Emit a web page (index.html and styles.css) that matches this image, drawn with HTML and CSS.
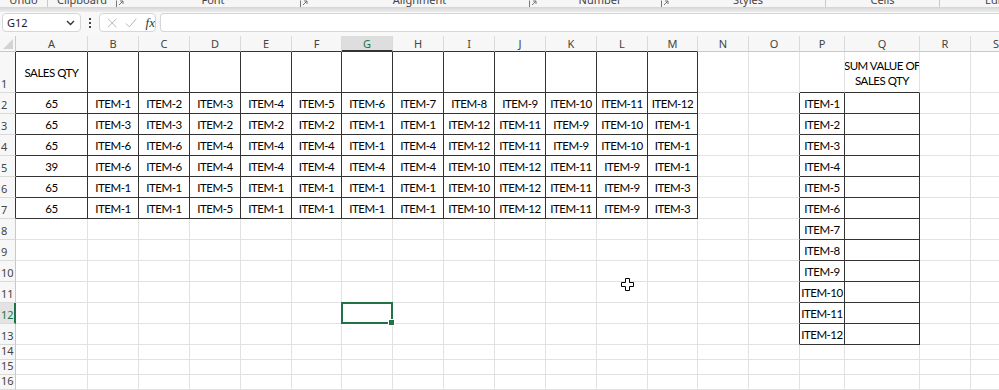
FILE: index.html
```html
<!DOCTYPE html>
<html lang="en">
<head>
<meta charset="UTF-8" />
<title>Book1 - Excel</title>
<link rel="stylesheet" href="styles.css">
</head>
<body>
<div class="ribbon">
    <div class="grp sep" style="width:48px">Undo</div>
    <div class="grp" style="width:68px">Clipboard</div>
    <div class="launch"><svg width="8" height="8" viewBox="0 0 8 8"><path d="M0.5 0.5v7h7M3 5l4-4M4 1h3v3" fill="none" stroke="#777"/></svg></div>
    <div class="grp" style="width:174px">Font</div>
    <div class="launch"><svg width="8" height="8" viewBox="0 0 8 8"><path d="M0.5 0.5v7h7M3 5l4-4M4 1h3v3" fill="none" stroke="#777"/></svg></div>
    <div class="grp" style="width:219px">Alignment</div>
    <div class="launch"><svg width="8" height="8" viewBox="0 0 8 8"><path d="M0.5 0.5v7h7M3 5l4-4M4 1h3v3" fill="none" stroke="#777"/></svg></div>
    <div class="grp" style="width:122px">Number</div>
    <div class="launch"><svg width="8" height="8" viewBox="0 0 8 8"><path d="M0.5 0.5v7h7M3 5l4-4M4 1h3v3" fill="none" stroke="#777"/></svg></div>
    <div class="grp sep" style="width:155px">Styles</div>
    <div class="grp sep" style="width:114px">Cells</div>
    <div class="grp" style="width:126px">Editing</div>
</div>
<div class="ribbon-edge"></div>
<div class="fbar">
    <div class="namebox">
        <span>G12</span>
        <svg width="9" height="6" viewBox="0 0 9 6"><path d="M1 1l3.5 3.5L8 1" fill="none" stroke="#333" stroke-width="1.4"/></svg>
    </div>
    <div class="grip"><i></i><i></i><i></i></div>
    <div class="tools">
        <svg width="12" height="12" viewBox="0 0 12 12"><path d="M1 1l10 10M11 1L1 11" stroke="#b4b4b4" stroke-width="1.1"/></svg>
        <svg width="14" height="12" viewBox="0 0 14 12"><path d="M1 6.5l4 4L13 1" fill="none" stroke="#b4b4b4" stroke-width="1.1"/></svg>
        <span class="fx">fx</span>
    </div>
    <div class="formula"></div>
</div>
<div class="wrap">
    <div id="sheet" class="sheet"></div>
    <svg class="cursor" width="13" height="13" viewBox="0 0 13 13"><path d="M4.5 0.5h4v4h4v4h-4v4h-4v-4h-4v-4h4z" fill="#fff" stroke="#000" stroke-linejoin="round"/></svg>
</div>
<script>
window.onload = function (){
	var sheet = document.getElementById("sheet"),
		letters = ["","A","B","C","D","E","F","G","H","I","J","K","L","M","N","O","P","Q","R","S"],
		rows = [
			["65","ITEM-1","ITEM-2","ITEM-3","ITEM-4","ITEM-5","ITEM-6","ITEM-7","ITEM-8","ITEM-9","ITEM-10","ITEM-11","ITEM-12"],
			["65","ITEM-3","ITEM-3","ITEM-2","ITEM-2","ITEM-2","ITEM-1","ITEM-1","ITEM-12","ITEM-11","ITEM-9","ITEM-10","ITEM-1"],
			["65","ITEM-6","ITEM-6","ITEM-4","ITEM-4","ITEM-4","ITEM-1","ITEM-4","ITEM-12","ITEM-11","ITEM-9","ITEM-10","ITEM-1"],
			["39","ITEM-6","ITEM-6","ITEM-4","ITEM-4","ITEM-4","ITEM-4","ITEM-4","ITEM-10","ITEM-12","ITEM-11","ITEM-9","ITEM-1"],
			["65","ITEM-1","ITEM-1","ITEM-5","ITEM-1","ITEM-1","ITEM-1","ITEM-1","ITEM-10","ITEM-12","ITEM-11","ITEM-9","ITEM-3"],
			["65","ITEM-1","ITEM-1","ITEM-5","ITEM-1","ITEM-1","ITEM-1","ITEM-1","ITEM-10","ITEM-12","ITEM-11","ITEM-9","ITEM-3"]
		];

	// cells with a black border all round
	function box(r, c){
		return (r >= 1 && r <= 7 && c >= 1 && c <= 13) || (r >= 2 && r <= 13 && (c == 16 || c == 17));
	}

	function text(r, c){
		if (r == 1 && c == 1) return "SALES QTY";
		if (r == 1 && c == 17) return "SUM VALUE OF<br>SALES QTY";
		if (r >= 2 && r <= 7 && c >= 1 && c <= 13) return rows[r - 2][c - 1];
		if (r >= 2 && r <= 13 && c == 16) return "ITEM-" + (r - 1);
		return "";
	}

	for (var r = 0; r <= 16; r++){
		for (var c = 0; c <= 19; c++){
			var el = document.createElement("div"),
				cls = "cell";
			if (r == 0 && c == 0){
				cls += " corner";
				el.innerHTML = "<span></span>";
			}else if (r == 0){
				cls += " hd";
				if (c == 7) cls += " hsel";
				el.innerHTML = letters[c];
			}else if (c == 0){
				cls += " rh";
				if (r == 12) cls += " rsel";
				el.innerHTML = r;
			}else{
				el.innerHTML = text(r, c);
				if (r == 1 && c == 17) cls += " wrapped";
				if (r == 12 && c == 7) cls += " sel";
			}
			if (box(r, c) || box(r + 1, c)) cls += " bb";
			if (box(r, c) || box(r, c + 1)) cls += " br";
			el.className = cls;
			sheet.appendChild(el);
		}
	}
}
</script>
</body>
</html>
```

FILE: styles.css
```css
*{margin:0;padding:0;box-sizing:border-box;}
body{width:999px;height:390px;overflow:hidden;background:#fff;font:11px/1.2 "Noto Sans","Open Sans",sans-serif;color:#333;}

.ribbon{display:flex;height:7px;overflow:hidden;background:#f6f6f6;}
.ribbon .grp{flex:none;text-align:center;margin-top:-6px;font-size:11px;line-height:12px;color:#444;}
.ribbon .sep{border-right:1px solid #c9c9c9;}
.ribbon .launch{flex:none;width:10px;margin-top:-3px;}
.ribbon-edge{height:5px;background:linear-gradient(#d5d5d5,#ececec);}

.fbar{display:flex;align-items:center;height:24px;padding:0 0 3px 2px;background:#f8f8f8;}
.namebox{display:flex;align-items:center;justify-content:space-between;width:79px;height:19px;padding:0 5px 0 4px;background:#fff;border:1px solid #d6d6d6;border-radius:4px;font-size:11px;color:#222;}
.grip{display:flex;flex-direction:column;gap:2px;width:18px;align-items:center;}
.grip i{display:block;width:2px;height:2px;background:#444;}
.tools{display:flex;align-items:center;gap:8px;width:57px;height:19px;padding:0 0 0 7px;background:#fff;border:1px solid #d6d6d6;border-radius:4px;}
.tools .fx{font:italic 13px "Liberation Serif",serif;color:#333;}
.formula{flex:1;height:19px;margin-left:4px;background:#fff;border:1px solid #d6d6d6;border-right:0;border-radius:4px 0 0 4px;}

.wrap{position:relative;}
.sheet{display:grid;grid-template-columns:16px 72px 51px 51px 51px 51px 50px 51px 51px 51px 51px 51px 51px 50px 51px 51px 45px 75px 51px 51px;grid-template-rows:16px 41px repeat(12,21px) repeat(3,15px);width:999px;overflow:hidden;}
.cell{display:flex;align-items:center;justify-content:center;padding-top:1px;overflow:hidden;white-space:nowrap;border-right:1px solid #e2e2e2;border-bottom:1px solid #e2e2e2;font:11.5px "Lato","Liberation Sans",sans-serif;letter-spacing:-0.5px;color:#000;}
.cell.wrapped{text-align:center;line-height:15px;}

.hd{padding-top:0;background:#f7f7f7;border-right-color:#dadada;border-bottom-color:#c8c8c8;font:11px "Noto Sans","Open Sans",sans-serif;letter-spacing:0;color:#444;}
.hsel{background:#dedede;color:#217346;border-bottom:2px solid #217346;}
.corner{align-items:flex-end;justify-content:flex-end;padding:0 2px 2px 0;background:#f7f7f7;border-right-color:#c8c8c8;border-bottom-color:#c8c8c8;}
.corner span{width:0;height:0;border-left:10px solid transparent;border-bottom:10px solid #d3d3d3;}
.rh{justify-content:flex-start;align-items:flex-end;padding:0 0 1px 1px;background:#f7f7f7;border-right-color:#c8c8c8;border-bottom-color:#dadada;font:11px "Noto Sans","Open Sans",sans-serif;letter-spacing:0;color:#444;}
.rsel{background:#e3e3e3;color:#217346;border-right:2px solid #217346;}

.cell.bb{border-bottom-color:#333;}
.cell.br{border-right-color:#333;}

.sel{position:relative;overflow:visible;}
.sel::after{content:"";position:absolute;left:-1px;top:-1px;right:-1px;bottom:-1px;border:2px solid #217346;}
.sel::before{content:"";position:absolute;right:-3px;bottom:-3px;width:5px;height:5px;background:#217346;border:1px solid #fff;z-index:1;}

.cursor{position:absolute;left:621px;top:242px;}
```
